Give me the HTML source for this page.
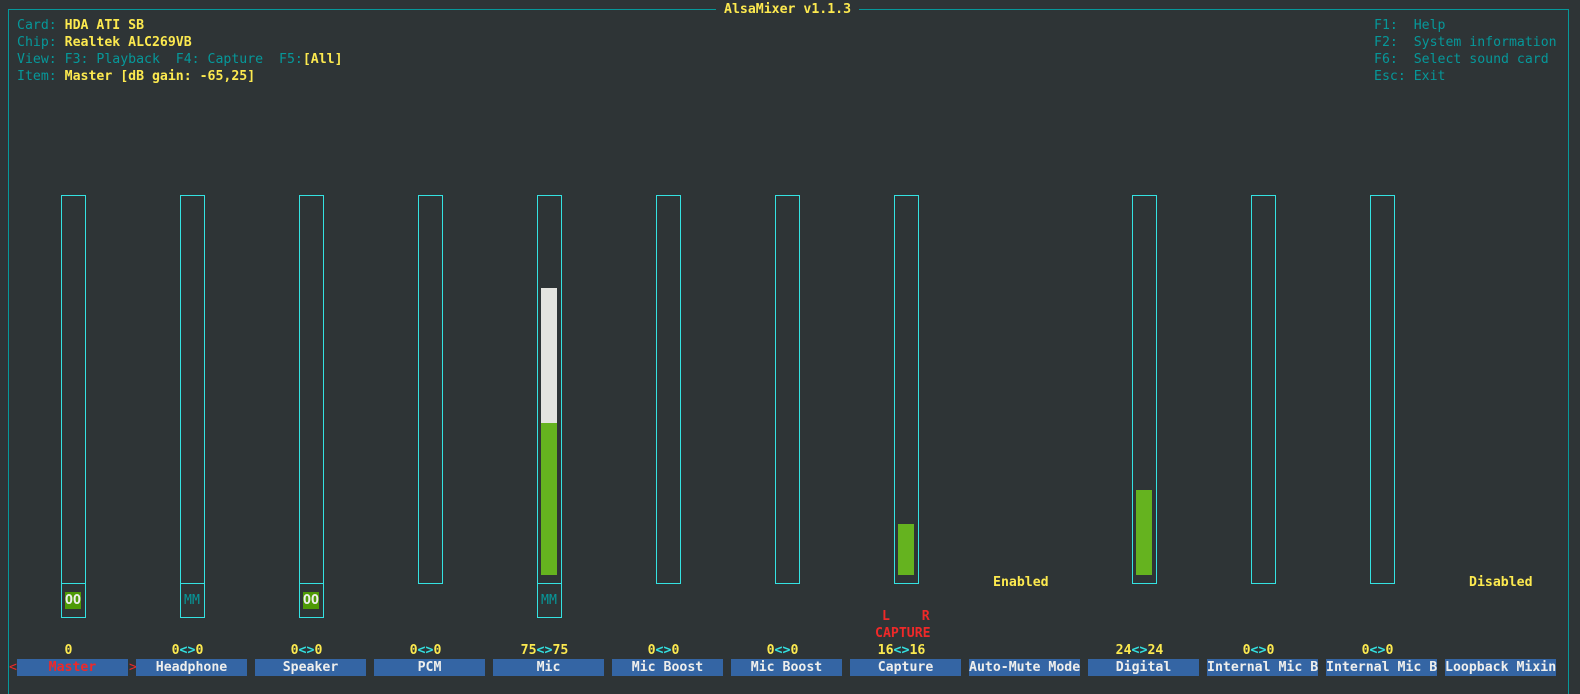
<!DOCTYPE html>
<html style="overflow:hidden"><head><meta charset="utf-8"><style>
html,body{margin:0;width:1580px;height:694px;overflow:hidden}
body{background:#2e3436;position:relative;font-family:"DejaVu Sans Mono","Liberation Mono",monospace;font-size:13.2px;line-height:17px;}
.a{position:absolute;white-space:pre;}
.t{color:#06989a}.y{color:#fce94f;font-weight:bold}.c{color:#34e2e2;font-weight:bold}.r{color:#ef2929;font-weight:bold}
.frame{position:absolute;left:8px;top:9px;width:1559px;height:684px;border:1px solid #06989a;border-bottom:none}
.title{position:absolute;left:716px;top:1px;padding:0 8px;background:#2e3436;color:#fce94f;font-weight:bold}
.bar{position:absolute;width:23px;top:195px;height:387px;border:1px solid #34e2e2}
.mute{position:absolute;width:23px;top:583px;height:33px;border:1px solid #34e2e2}
.lab{position:absolute;top:659px;height:17px;width:111px;background:#3465a4;color:#eeeeec;font-weight:bold;text-align:center;white-space:pre}
.val{position:absolute;top:642px;width:111px;text-align:center;white-space:pre}
.fill{position:absolute;width:16px}
</style></head><body>
<div class="frame"></div>
<div class="title">AlsaMixer v1.1.3</div>
<div class="a" style="left:17px;top:17px"><span class="t">Card: </span><span class="y">HDA ATI SB</span></div>
<div class="a" style="left:17px;top:34px"><span class="t">Chip: </span><span class="y">Realtek ALC269VB</span></div>
<div class="a" style="left:17px;top:51px"><span class="t">View: F3: Playback  F4: Capture  F5:</span><span class="y">[All]</span></div>
<div class="a" style="left:17px;top:68px"><span class="t">Item: </span><span class="y">Master [dB gain: -65,25]</span></div>
<div class="a t" style="left:1374px;top:17px">F1:  Help</div>
<div class="a t" style="left:1374px;top:34px">F2:  System information</div>
<div class="a t" style="left:1374px;top:51px">F6:  Select sound card</div>
<div class="a t" style="left:1374px;top:68px">Esc: Exit</div>

<div class="bar" style="left:61px"></div>
<div class="bar" style="left:180px"></div>
<div class="bar" style="left:299px"></div>
<div class="bar" style="left:418px"></div>
<div class="bar" style="left:537px"></div>
<div class="bar" style="left:656px"></div>
<div class="bar" style="left:775px"></div>
<div class="bar" style="left:894px"></div>
<div class="bar" style="left:1132px"></div>
<div class="bar" style="left:1251px"></div>
<div class="bar" style="left:1370px"></div>

<div class="fill" style="left:541px;top:288px;height:135px;background:#e4e4e0"></div>
<div class="fill" style="left:541px;top:423px;height:152px;background:#65b31f"></div>
<div class="fill" style="left:898px;top:524px;height:51px;background:#65b31f"></div>
<div class="fill" style="left:1136px;top:490px;height:85px;background:#65b31f"></div>

<div class="mute" style="left:61px"></div>
<div class="mute" style="left:180px"></div>
<div class="mute" style="left:299px"></div>
<div class="mute" style="left:537px"></div>
<div class="a" style="left:65px;top:592px;background:#4e9a06;color:#eeeeec;font-weight:bold">OO</div>
<div class="a" style="left:303px;top:592px;background:#4e9a06;color:#eeeeec;font-weight:bold">OO</div>
<div class="a" style="left:184px;top:592px;color:#06989a">MM</div>
<div class="a" style="left:541px;top:592px;color:#06989a">MM</div>

<div class="a y" style="left:993px;top:574px">Enabled</div>
<div class="a y" style="left:1469px;top:574px">Disabled</div>
<div class="a r" style="left:882px;top:608px">L    R</div>
<div class="a r" style="left:875px;top:625px">CAPTURE</div>

<div class="val y" style="left:13px">0</div>
<div class="val" style="left:132px"><span class="y">0</span><span class="c">&lt;&gt;</span><span class="y">0</span></div>
<div class="val" style="left:251px"><span class="y">0</span><span class="c">&lt;&gt;</span><span class="y">0</span></div>
<div class="val" style="left:370px"><span class="y">0</span><span class="c">&lt;&gt;</span><span class="y">0</span></div>
<div class="val" style="left:489px"><span class="y">75</span><span class="c">&lt;&gt;</span><span class="y">75</span></div>
<div class="val" style="left:608px"><span class="y">0</span><span class="c">&lt;&gt;</span><span class="y">0</span></div>
<div class="val" style="left:727px"><span class="y">0</span><span class="c">&lt;&gt;</span><span class="y">0</span></div>
<div class="val" style="left:846px"><span class="y">16</span><span class="c">&lt;&gt;</span><span class="y">16</span></div>
<div class="val" style="left:1084px"><span class="y">24</span><span class="c">&lt;&gt;</span><span class="y">24</span></div>
<div class="val" style="left:1203px"><span class="y">0</span><span class="c">&lt;&gt;</span><span class="y">0</span></div>
<div class="val" style="left:1322px"><span class="y">0</span><span class="c">&lt;&gt;</span><span class="y">0</span></div>

<div class="a r" style="left:9px;top:659px;font-weight:normal">&lt;</div>
<div class="a r" style="left:129px;top:659px;font-weight:normal">&gt;</div>
<div class="lab" style="left:17px;color:#ef2929">Master</div>
<div class="lab" style="left:136px">Headphone</div>
<div class="lab" style="left:255px">Speaker</div>
<div class="lab" style="left:374px">PCM</div>
<div class="lab" style="left:493px">Mic</div>
<div class="lab" style="left:612px">Mic Boost</div>
<div class="lab" style="left:731px">Mic Boost</div>
<div class="lab" style="left:850px">Capture</div>
<div class="lab" style="left:969px">Auto-Mute Mode</div>
<div class="lab" style="left:1088px">Digital</div>
<div class="lab" style="left:1207px">Internal Mic B</div>
<div class="lab" style="left:1326px">Internal Mic B</div>
<div class="lab" style="left:1445px">Loopback Mixin</div>
</body></html>
